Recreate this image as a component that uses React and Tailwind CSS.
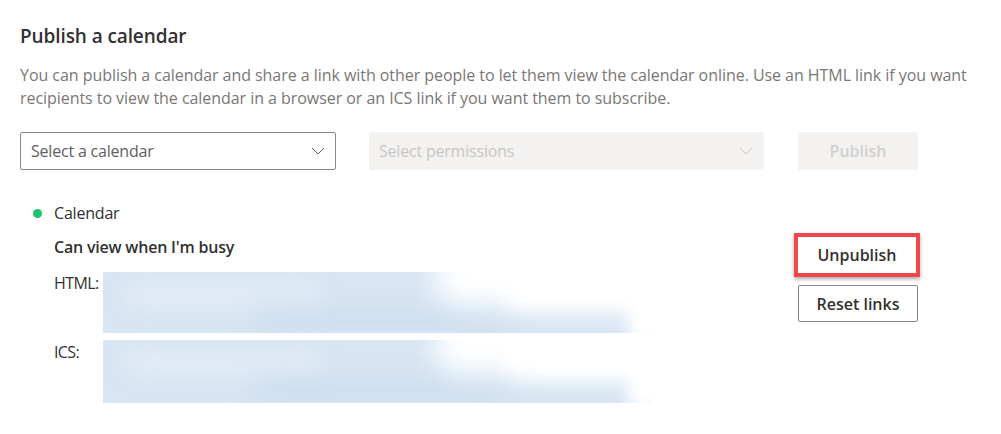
import React from "react";

function Chevron({ color }) {
  return (
    <svg width="14" height="8" viewBox="0 0 14 8" fill="none">
      <path d="M1 1l6 6 6-6" stroke={color} strokeWidth="1" />
    </svg>
  );
}

function Blur({ h }) {
  return (
    <div className={`relative ${h} w-[549px] overflow-hidden bg-[#d8e5f2]`}>
      <div className="absolute left-[20px] top-[8px] h-[30px] w-[200px] rounded-full bg-[#e1ebf5] blur-[10px]" />
      <div className="absolute left-[150px] top-[35px] h-[30px] w-[250px] rounded-full bg-[#cfdff0] blur-[10px]" />
      <div className="absolute left-[330px] top-[-25px] h-[58px] w-[300px] rounded-full bg-white blur-[14px]" />
      <div className="absolute left-[400px] top-[-10px] h-[48px] w-[200px] rounded-full bg-white blur-[10px]" />
      <div className="absolute left-[525px] top-[0px] h-[70px] w-[40px] bg-white blur-[8px]" />
    </div>
  );
}

export default function App() {
  return (
    <div className="min-h-[434px] w-[1001px] bg-white px-5 pt-6" style={{ fontFamily: '"Open Sans", "Noto Sans", sans-serif' }}>
      <h1 className="text-[19px] font-semibold leading-6 tracking-[-0.1px] text-[#323130]">Publish a calendar</h1>
      <p className="mt-4 w-[960px] text-[16px] leading-[23px] tracking-[-0.05px] text-[#797775]">
        You can publish a calendar and share a link with other people to let them view the calendar online. Use an HTML link if you want recipients to view the calendar in a browser or an ICS link if you want them to subscribe.
      </p>
      <div className="mt-[22px] flex">
        <div className="flex h-[38px] w-[316px] items-center justify-between rounded-[2px] border border-[#8a8886] pl-[10px] pr-[10px]">
          <span className="text-[16px] tracking-[-0.2px] text-[#605e5c]">Select a calendar</span>
          <Chevron color="#605e5c" />
        </div>
        <div className="ml-[33px] flex h-[38px] w-[395px] items-center justify-between rounded-[2px] bg-[#f3f2f1] pl-[10px] pr-[11px]">
          <span className="text-[16px] tracking-[-0.2px] text-[#c8c6c4]">Select permissions</span>
          <Chevron color="#c8c6c4" />
        </div>
        <button className="ml-[34px] h-[38px] w-[120px] rounded-[2px] bg-[#f3f2f1] text-[16px] font-semibold text-[#d2d0ce]">Publish</button>
      </div>
      <div className="flex">
        <div className="flex-1">
          <div className="mt-[31px] flex items-center pl-[13px]">
            <span className="h-[9px] w-[9px] rounded-full bg-[#1dc36d]" />
            <span className="ml-[12px] text-[16px] leading-6 tracking-[-0.2px] text-[#323130]">Calendar</span>
          </div>
          <div className="mt-[10px] pl-[34px] text-[16px] font-semibold leading-6 tracking-[-0.2px] text-[#323130]">Can view when I'm busy</div>
          <div className="mt-[13px] flex pl-[34px]">
            <span className="-mt-[1px] w-[49px] text-[16px] leading-6 tracking-[-0.6px] text-[#323130]">HTML:</span>
            <Blur h="h-[61px]" />
          </div>
          <div className="mt-[7px] flex pl-[34px]">
            <span className="w-[49px] text-[16px] leading-6 tracking-[-0.6px] text-[#323130]">ICS:</span>
            <Blur h="h-[63px]" />
          </div>
        </div>
        <div className="mr-[61px] mt-[63px] flex w-[126px] flex-col">
          <button className="h-[44px] w-[126px] border-4 border-[#f04848] bg-white text-[16px] font-semibold text-[#323130] shadow-[0_2px_4px_rgba(0,0,0,0.35)]">Unpublish</button>
          <button className="ml-[4px] mt-[8px] h-[37px] w-[120px] rounded-[2px] border border-[#8a8886] bg-white text-[16px] font-semibold text-[#323130]">Reset links</button>
        </div>
      </div>
    </div>
  );
}
